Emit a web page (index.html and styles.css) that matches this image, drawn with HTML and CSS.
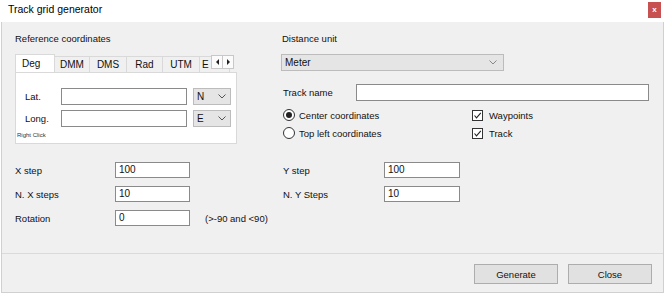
FILE: index.html
```html
<!DOCTYPE html>
<html lang="en">
<head>
    <meta charset="utf-8" />
    <title>Track grid generator</title>
    <link rel="stylesheet" href="styles.css">
</head>
<body>

<div class="window">
    <div class="titlebar">
        <span class="title">Track grid generator</span>
        <span class="close-x">x</span>
    </div>
    <div class="client">
        <div class="main">
            <div class="top">
                <!-- reference coordinates -->
                <div class="refcol">
                    <div class="label">Reference coordinates</div>
                    <div class="tabs">
                        <span class="tab active">Deg</span>
                        <span class="tab w35">DMM</span>
                        <span class="tab w37">DMS</span>
                        <span class="tab w36">Rad</span>
                        <span class="tab w37">UTM</span>
                        <span class="tab last">E</span>
                        <div class="tabscroll">
                            <span class="sbtn"><i class="tri-l"></i></span>
                            <span class="sbtn"><i class="tri-r"></i></span>
                        </div>
                    </div>
                    <div class="tabpanel">
                        <div class="crow">
                            <span class="clabel">Lat.</span>
                            <span class="textbox w126"></span>
                            <span class="combo small"><span>N</span><svg width="8" height="5" viewBox="0 0 8 5"><polyline points="0.5,0.5 4,4 7.5,0.5" fill="none" stroke="#555" stroke-width="1"/></svg></span>
                        </div>
                        <div class="crow">
                            <span class="clabel">Long.</span>
                            <span class="textbox w126"></span>
                            <span class="combo small"><span>E</span><svg width="8" height="5" viewBox="0 0 8 5"><polyline points="0.5,0.5 4,4 7.5,0.5" fill="none" stroke="#555" stroke-width="1"/></svg></span>
                        </div>
                        <div class="hint">Right Click</div>
                    </div>
                </div>

                <!-- options -->
                <div class="optcol">
                    <div class="label ind1">Distance unit</div>
                    <div class="combo wide"><span>Meter</span><svg width="8" height="5" viewBox="0 0 8 5"><polyline points="0.5,0.5 4,4 7.5,0.5" fill="none" stroke="#888" stroke-width="1"/></svg></div>
                    <div class="namerow">
                        <span class="nlabel">Track name</span>
                        <span class="textbox grow"></span>
                    </div>
                    <div class="opts">
                        <div class="opt"><span class="radio on"></span>Center coordinates</div>
                        <div class="opt chk"><span class="check"><svg width="9" height="9" viewBox="0 0 9 9"><polyline points="1.5,4.5 3.5,6.8 7.8,1.8" fill="none" stroke="#222" stroke-width="1.1"/></svg></span>Waypoints</div>
                        <div class="opt"><span class="radio"></span>Top left coordinates</div>
                        <div class="opt chk"><span class="check"><svg width="9" height="9" viewBox="0 0 9 9"><polyline points="1.5,4.5 3.5,6.8 7.8,1.8" fill="none" stroke="#222" stroke-width="1.1"/></svg></span>Track</div>
                    </div>
                </div>
            </div>

            <div class="params">
                <div class="pcol left">
                    <div class="prow"><span class="plabel">X step</span><span class="textbox w75">100</span></div>
                    <div class="prow"><span class="plabel">N. X steps</span><span class="textbox w75">10</span></div>
                    <div class="prow"><span class="plabel">Rotation</span><span class="textbox w75">0</span><span class="note">(&gt;-90 and &lt;90)</span></div>
                </div>
                <div class="pcol right">
                    <div class="prow"><span class="plabel r">Y step</span><span class="textbox w76">100</span></div>
                    <div class="prow"><span class="plabel r">N. Y Steps</span><span class="textbox w76">10</span></div>
                </div>
            </div>
        </div>
        <div class="footer">
            <button class="btn">Generate</button>
            <button class="btn">Close</button>
        </div>
    </div>
</div>

</body>
</html>
```

FILE: styles.css
```css
* { box-sizing: border-box; }
body { margin: 0; background: #fff; font-family: "Liberation Sans", Arial, sans-serif; font-size: 9.5px; color: #111; }

.window { width: 666px; height: 299px; }

.titlebar { height: 22px; display: flex; justify-content: space-between; align-items: flex-start; padding: 0 5px 0 8px; background: #fff; }
.title { font-size: 10.5px; line-height: 18px; color: #000; }
.close-x { width: 13px; height: 16px; margin-top: 2px; background: #c75050; color: #fff; font-size: 8px; line-height: 15px; text-align: center; font-weight: bold; }

.client { margin-left: 1px; width: 663px; height: 271px; background: #f0f0f0; border: 1px solid #d0d0d0; border-top: none; }
.main { height: 231px; padding: 11px 0 0 13px; }

.top { display: flex; }
.label { height: 12px; line-height: 12px; }
.ind1 { padding-left: 1px; }

/* tab control */
.refcol { width: 222px; }
.tabs { position: relative; margin-top: 8px; height: 19px; display: flex; align-items: flex-end; overflow: hidden; }
.tab { flex: none; height: 16px; line-height: 15px; text-align: center; background: #f0f0f0; border: 1px solid #d9d9d9; border-bottom: none; border-left: none; font-size: 10px; }
.tab.active { width: 40px; height: 19px; line-height: 18px; background: #fff; border-left: 1px solid #d9d9d9; position: relative; z-index: 1; margin-bottom: -1px; text-align: left; padding-left: 6px; }
.tab.last { width: 30px; text-align: left; padding-left: 2px; }
.w35 { width: 35px; }
.w36 { width: 36px; }
.w37 { width: 37px; }
.tabscroll { position: absolute; left: 196px; top: 2px; display: flex; z-index: 2; }
.sbtn { width: 12px; height: 14px; background: #fbfbfb; border: 1px solid #c8c8c8; display: flex; align-items: center; justify-content: center; }
.sbtn + .sbtn { border-left: none; width: 11px; }
.tri-l { width: 0; height: 0; border-top: 3px solid transparent; border-bottom: 3px solid transparent; border-right: 3px solid #222; }
.tri-r { width: 0; height: 0; border-top: 3px solid transparent; border-bottom: 3px solid transparent; border-left: 3px solid #222; }

.tabpanel { height: 72px; background: #fff; border: 1px solid #d9d9d9; padding-top: 15px; }
.crow { display: flex; align-items: center; height: 17px; padding-left: 9px; margin-bottom: 5px; }
.clabel { width: 36px; }
.hint { font-size: 6px; line-height: 8px; padding-left: 1px; margin-top: -1px; color: #333; }

.textbox { display: block; height: 17px; background: #fff; border: 1px solid #8a8a8a; line-height: 14px; padding-left: 3px; font-size: 10px; }
.w126 { width: 126px; }
.w75 { width: 75px; }
.w76 { width: 76px; }
.grow { flex: 1; }

.combo { display: flex; align-items: center; justify-content: space-between; height: 17px; background: #e5e5e5; border: 1px solid #bcbcbc; font-size: 10px; }
.combo.small { width: 38px; margin-left: 6px; padding: 0 4px 0 3px; }
.combo.wide { width: 223px; margin-top: 9px; padding: 0 6px 0 3px; }

/* options column */
.optcol { width: 368px; margin-left: 44px; }
.namerow { display: flex; align-items: center; margin-top: 13px; height: 17px; }
.nlabel { width: 75px; padding-left: 2px; }
.opts { display: grid; grid-template-columns: 191px 1fr; margin-top: 5px; }
.opt { display: flex; align-items: center; height: 18px; padding-left: 2px; }
.opt.chk { padding-left: 0; }
.radio { width: 12px; height: 12px; border: 1px solid #333; border-radius: 50%; background: #fff; margin-right: 4px; display: flex; align-items: center; justify-content: center; }
.radio.on::after { content: ""; width: 6px; height: 6px; border-radius: 50%; background: #222; }
.check { width: 11px; height: 11px; border: 1px solid #333; background: #fff; margin-right: 6px; display: flex; align-items: center; justify-content: center; }
.check svg { display: block; }

/* step parameters */
.params { display: flex; margin-top: 18px; }
.pcol.left { width: 268px; }
.prow { display: flex; align-items: center; height: 16px; margin-bottom: 8px; }
.prow .textbox { height: 16px; line-height: 13px; }
.plabel { width: 100px; }
.plabel.r { width: 101px; }
.note { margin-left: 15px; }

.footer { height: 39px; border-top: 1px solid #dadada; display: flex; justify-content: flex-end; gap: 10px; padding: 10px 11px 0 0; }
.btn { width: 84px; height: 20px; background: #e1e1e1; border: 1px solid #adadad; font-family: "Liberation Sans", Arial, sans-serif; font-size: 9.5px; color: #111; padding: 0; }
```
